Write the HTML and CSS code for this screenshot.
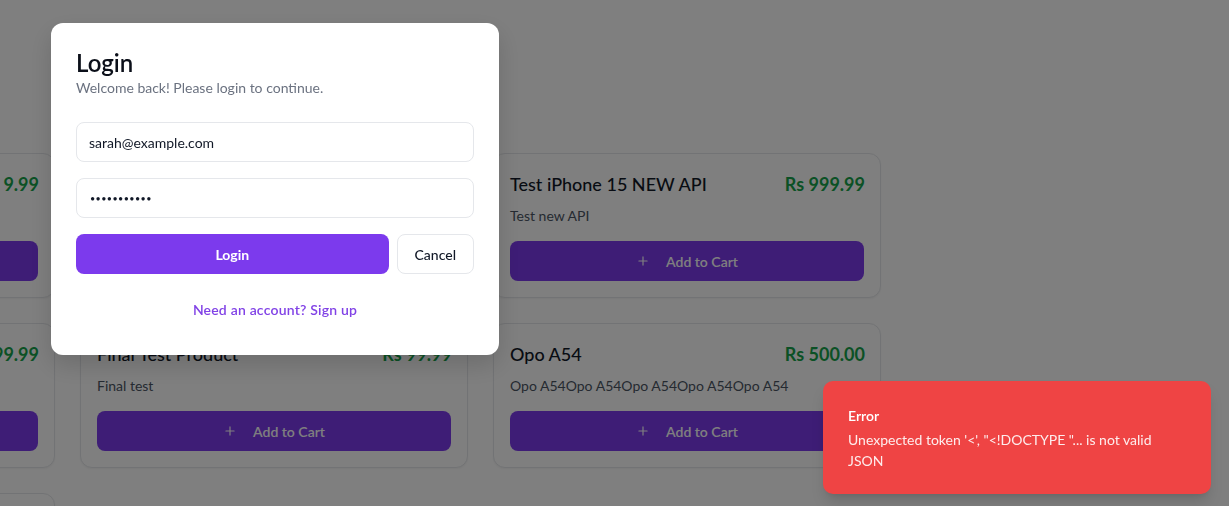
FILE: index.html
```html
<!DOCTYPE html>
<html lang="en">
<head>
<meta charset="utf-8">
<title>Shop</title>
<link rel="stylesheet" href="styles.css">
</head>
<body>
<main class="page">
  <div class="grid">
    <div class="card">
      <div class="card-head"><h3 class="card-title">Sample Product</h3><span class="price">Rs 9.99</span></div>
      <p class="card-desc">Sample description</p>
      <button class="add-btn"><svg class="plus" viewBox="0 0 24 24" width="14" height="14"><path d="M12 5v14M5 12h14" fill="none" stroke="currentColor" stroke-width="2" stroke-linecap="round"/></svg><span>Add to Cart</span></button>
    </div>
    <div class="card">
      <div class="card-head"><h3 class="card-title">Test Product</h3><span class="price">Rs 49.99</span></div>
      <p class="card-desc">Test description</p>
      <button class="add-btn"><svg class="plus" viewBox="0 0 24 24" width="14" height="14"><path d="M12 5v14M5 12h14" fill="none" stroke="currentColor" stroke-width="2" stroke-linecap="round"/></svg><span>Add to Cart</span></button>
    </div>
    <div class="card">
      <div class="card-head"><h3 class="card-title">Test iPhone 15 NEW API</h3><span class="price">Rs 999.99</span></div>
      <p class="card-desc">Test new API</p>
      <button class="add-btn"><svg class="plus" viewBox="0 0 24 24" width="14" height="14"><path d="M12 5v14M5 12h14" fill="none" stroke="currentColor" stroke-width="2" stroke-linecap="round"/></svg><span>Add to Cart</span></button>
    </div>
    <div class="card">
      <div class="card-head"><h3 class="card-title">Test iPhone 15</h3><span class="price">Rs 99.99</span></div>
      <p class="card-desc">Test phone</p>
      <button class="add-btn"><svg class="plus" viewBox="0 0 24 24" width="14" height="14"><path d="M12 5v14M5 12h14" fill="none" stroke="currentColor" stroke-width="2" stroke-linecap="round"/></svg><span>Add to Cart</span></button>
    </div>
    <div class="card">
      <div class="card-head"><h3 class="card-title">Final Test Product</h3><span class="price">Rs 99.99</span></div>
      <p class="card-desc">Final test</p>
      <button class="add-btn"><svg class="plus" viewBox="0 0 24 24" width="14" height="14"><path d="M12 5v14M5 12h14" fill="none" stroke="currentColor" stroke-width="2" stroke-linecap="round"/></svg><span>Add to Cart</span></button>
    </div>
    <div class="card">
      <div class="card-head"><h3 class="card-title">Opo A54</h3><span class="price">Rs 500.00</span></div>
      <p class="card-desc">Opo A54Opo A54Opo A54Opo A54Opo A54</p>
      <button class="add-btn"><svg class="plus" viewBox="0 0 24 24" width="14" height="14"><path d="M12 5v14M5 12h14" fill="none" stroke="currentColor" stroke-width="2" stroke-linecap="round"/></svg><span>Add to Cart</span></button>
    </div>
    <div class="card">
      <div class="card-head"><h3 class="card-title">Pixel 8</h3><span class="price">Rs 799.00</span></div>
      <p class="card-desc">Google phone</p>
      <button class="add-btn"><svg class="plus" viewBox="0 0 24 24" width="14" height="14"><path d="M12 5v14M5 12h14" fill="none" stroke="currentColor" stroke-width="2" stroke-linecap="round"/></svg><span>Add to Cart</span></button>
    </div>
  </div>
</main>

<div class="overlay"></div>

<div class="modal" role="dialog">
  <h2 class="modal-title">Login</h2>
  <p class="modal-sub">Welcome back! Please login to continue.</p>
  <form class="form">
    <input class="field" type="email" value="sarah@example.com">
    <input class="field field-password" type="password" value="password123">
    <div class="actions">
      <button type="button" class="btn-primary">Login</button>
      <button type="button" class="btn-outline">Cancel</button>
    </div>
  </form>
  <p class="switch"><a href="#" class="switch-link">Need an account? Sign up</a></p>
</div>

<div class="toast">
  <div class="toast-title">Error</div>
  <div class="toast-desc">Unexpected token '&lt;', "&lt;!DOCTYPE "... is not valid JSON</div>
</div>
</body>
</html>
```
FILE: styles.css
```css
* { box-sizing: border-box; }
html, body { margin: 0; padding: 0; }
body {
  font-family: "Lato", "Segoe UI", "Noto Sans", sans-serif;
  background: #ffffff;
  color: #111827;
  width: 1229px;
  height: 506px;
  overflow: hidden;
}
.page {
  padding-top: 153px;
  overflow: hidden;
}
.grid {
  display: grid;
  grid-template-columns: repeat(3, 388px);
  column-gap: 25px;
  row-gap: 25px;
  margin-left: -333px;
}
.card {
  background: #fff;
  border: 1px solid #e5e7eb;
  border-radius: 12px;
  padding: 16px;
  box-shadow: 0 1px 2px rgba(0,0,0,0.05);
}
.card-head {
  display: flex;
  justify-content: space-between;
  align-items: center;
  height: 28px;
}
.card-title {
  margin: 0;
  font-size: 18px;
  font-weight: 500;
  line-height: 28px;
  color: #111827;
}
.price {
  font-size: 18px;
  font-weight: 700;
  color: #16a34a;
  margin-right: -1px;
}
.card-desc {
  margin: 8px 0 15px;
  font-size: 14px;
  line-height: 20px;
  color: #4b5563;
}
.add-btn {
  width: 100%;
  height: 40px;
  border: none;
  border-radius: 8px;
  background: #7c3aed;
  color: #fff;
  font-family: inherit;
  font-size: 14px;
  font-weight: 600;
  display: flex;
  align-items: center;
  justify-content: center;
  gap: 16px;
}
.plus { display: block; }

.overlay {
  position: fixed;
  inset: 0;
  background: rgba(0,0,0,0.5);
}
.modal {
  position: fixed;
  left: 51px;
  top: 23px;
  width: 448px;
  background: #fff;
  border-radius: 12px;
  padding: 24px 25px 35px 25px;
  box-shadow: 0 10px 25px rgba(0,0,0,0.15);
}
.modal-title {
  margin: 0;
  font-size: 24px;
  font-weight: 600;
  line-height: 31px;
  color: #0b0f19;
}
.modal-sub {
  margin: 0;
  font-size: 14px;
  line-height: 20px;
  color: #6b7280;
}
.form {
  margin-top: 24px;
  display: flex;
  flex-direction: column;
  gap: 16px;
}
.field {
  height: 40px;
  width: 100%;
  border: 1px solid #e5e7eb;
  border-radius: 8px;
  padding: 0 12px;
  font-family: inherit;
  font-size: 14px;
  color: #111827;
  background: #fff;
  outline: none;
}
.field-password {
  font-size: 9px;
  letter-spacing: 0.4px;
  padding-left: 13px;
}
.actions {
  display: flex;
  gap: 8px;
}
.btn-primary {
  flex: 1;
  height: 40px;
  border: none;
  border-radius: 8px;
  background: #7c3aed;
  color: #fff;
  font-family: inherit;
  font-size: 14px;
  font-weight: 700;
}
.btn-outline {
  height: 40px;
  padding: 0 17px;
  border: 1px solid #e5e7eb;
  border-radius: 8px;
  background: #fff;
  color: #111827;
  font-family: inherit;
  font-size: 14px;
  font-weight: 500;
}
.switch {
  margin: 26px 0 0;
  text-align: center;
  font-size: 14px;
  line-height: 20px;
}
.switch-link {
  color: #8142e6;
  font-weight: 600;
  letter-spacing: 0.2px;
  text-decoration: none;
}

.toast {
  position: fixed;
  right: 18px;
  bottom: 12px;
  width: 388px;
  background: #ef4444;
  color: #fff;
  border-radius: 10px;
  padding: 24px 32px 23px 25px;
  box-shadow: 0 10px 15px -3px rgba(0,0,0,0.15), 0 4px 6px -4px rgba(0,0,0,0.1);
}
.toast-title {
  font-size: 14px;
  font-weight: 600;
  line-height: 21px;
}
.toast-desc {
  margin-top: 3px;
  font-size: 14px;
  line-height: 21px;
  opacity: 0.9;
}
```
